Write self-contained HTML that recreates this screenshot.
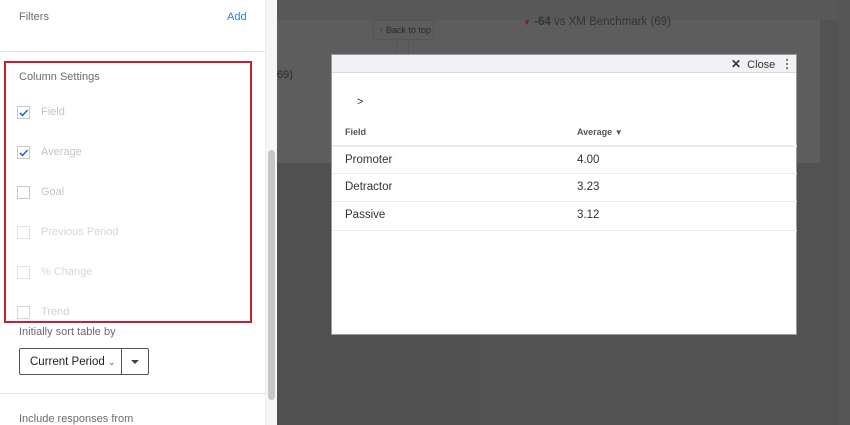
<!DOCTYPE html>
<html><head><style>
*{margin:0;padding:0;box-sizing:border-box}
body{width:850px;height:425px;overflow:hidden;position:relative;background:#525252;font-family:"Liberation Sans",sans-serif}
.a{position:absolute}
.t{font-size:11px;color:#6b6b6b}
.cb{position:absolute;left:17px;width:13px;height:13px;border:1px solid #c8c8c8;background:#fff}
.lbl{position:absolute;left:41px;font-size:11px;color:#c4c4c4}
.row{position:absolute;left:0;width:465px;height:28px;border-top:1px solid #ececec;font-size:11.5px;color:#333}
.row span{position:absolute;top:7px}
</style></head><body>
<div class="a" style="left:0;top:0;width:265px;height:425px;background:#fff"></div>
<div class="a t" style="left:19px;top:11px">Filters</div>
<div class="a" style="left:227px;top:11px;font-size:11px;color:#2f7fd0">Add</div>
<div class="a" style="left:0;top:51px;width:265px;height:1px;background:#e2e2e2"></div>
<div class="a" style="left:4px;top:61px;width:248px;height:262px;border:2px solid #c8202e"></div>
<div class="a t" style="left:19px;top:71px">Column Settings</div>
<div class="cb" style="top:106px"><svg width="11" height="11" style="position:absolute;left:0;top:0"><path d="M2 6 L4.5 8.5 L9.5 3" stroke="#1a6fd1" stroke-width="1.6" fill="none"/></svg></div>
<div class="lbl" style="top:106px">Field</div>
<div class="cb" style="top:146px"><svg width="11" height="11" style="position:absolute;left:0;top:0"><path d="M2 6 L4.5 8.5 L9.5 3" stroke="#1a6fd1" stroke-width="1.6" fill="none"/></svg></div>
<div class="lbl" style="top:146px">Average</div>
<div class="cb" style="top:186px"></div><div class="lbl" style="top:186px">Goal</div>
<div class="cb" style="top:226px;border-color:#e2e2e2"></div><div class="lbl" style="top:226px;color:#d6d6d6">Previous Period</div>
<div class="cb" style="top:266px;border-color:#e2e2e2"></div><div class="lbl" style="top:266px;color:#d6d6d6">% Change</div>
<div class="cb" style="top:306px;border-color:#d6d6d6"></div><div class="lbl" style="top:306px;color:#d0d0d0">Trend</div>
<div class="a t" style="left:19px;top:326px">Initially sort table by</div>
<div class="a" style="left:19px;top:348px;width:103px;height:27px;border:1px solid #555;border-radius:2px 0 0 2px;font-size:11.5px;color:#222;padding:7px 0 0 10px">Current Period <span style="font-size:9px;color:#555">&#8964;</span></div>
<div class="a" style="left:121px;top:348px;width:28px;height:27px;border:1px solid #555;border-radius:0 2px 2px 0"><svg width="26" height="25"><path d="M9 11 L17 11 L13 15Z" fill="#444"/></svg></div>
<div class="a" style="left:0;top:393px;width:265px;height:1px;background:#e2e2e2"></div>
<div class="a t" style="left:19px;top:413px">Include responses from</div>
<div class="a" style="left:265px;top:0;width:12px;height:425px;background:#f6f6f6;border-left:1px solid #ececec"></div>
<div class="a" style="left:268px;top:150px;width:7px;height:250px;background:#c6c6c6;border-radius:4px"></div>
<div class="a" style="left:277px;top:0;width:561px;height:20px;background:#585858"></div>
<div class="a" style="left:838px;top:0;width:12px;height:425px;background:#565656"></div>
<div class="a" style="left:277px;top:20px;width:543px;height:143px;background:#5d5d5d"></div>
<div class="a" style="left:277px;top:163px;width:203px;height:262px;background:#505050"></div>
<div class="a" style="left:373px;top:20px;width:61px;height:20px;border:1px solid #545454;border-radius:3px;font-size:9px;color:#2a2a2a;padding:4px 0 0 5px">↑ Back to top</div>
<div class="a" style="left:396px;top:40px;width:13px;height:14px;border-left:1px solid #545454;border-right:1px solid #545454"></div>
<div class="a" style="left:277px;top:69px;font-size:11px;color:#2a2a2a">69)</div>
<div class="a" style="left:523px;top:16px;font-size:11.5px;color:#333"><span style="color:#7a1c1c;font-size:8px">▼</span> <b>-64</b> vs XM Benchmark (69)</div>
<div class="a" style="left:331px;top:54px;width:466px;height:281px;background:#fff;border:1px solid #9a9a9a">
 <div class="a" style="left:0;top:0;width:464px;height:18px;background:#f2f2f6;border-bottom:1px solid #d8d8dc"></div>
 <div class="a" style="left:399px;top:2px;font-size:11px;color:#333"><span style="font-size:12px;font-weight:bold">✕</span>&nbsp; Close</div>
 <div class="a" style="left:454px;top:3px;width:2px;height:12px;background:radial-gradient(circle,#555 0.9px,transparent 1px) 0 0/2px 4px"></div>
 <div class="a" style="left:25px;top:41px;font-size:11px;color:#333">&gt;</div>
 <div class="a" style="left:13px;top:72px;font-size:9px;font-weight:bold;color:#555">Field</div>
 <div class="a" style="left:245px;top:72px;font-size:9px;font-weight:bold;color:#555">Average <span style="font-size:8px">▼</span></div>
 <div class="row" style="top:90px;border-top:2px solid #ececec"><span style="left:13px">Promoter</span><span style="left:245px">4.00</span></div>
 <div class="row" style="top:118px"><span style="left:13px">Detractor</span><span style="left:245px">3.23</span></div>
 <div class="row" style="top:146px"><span style="left:13px">Passive</span><span style="left:245px">3.12</span></div>
 <div class="a" style="left:0;top:175px;width:465px;height:1px;background:#ececec"></div>
</div>
</body></html>
